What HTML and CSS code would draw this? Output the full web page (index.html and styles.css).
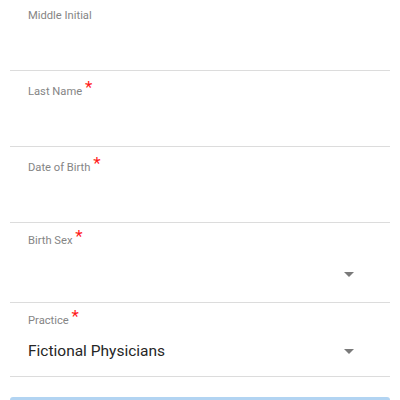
FILE: index.html
```html
<!DOCTYPE html>
<html>
<head>
<meta charset="utf-8">
<link rel="stylesheet" href="styles.css">
</head>
<body>
<div class="form">
  <div class="field field-first">
    <div class="label">Middle Initial</div>
  </div>
  <div class="field field-text">
    <div class="label">Last Name <span class="req">*</span></div>
  </div>
  <div class="field field-text">
    <div class="label">Date of Birth <span class="req">*</span></div>
  </div>
  <div class="field field-select field-tall">
    <div class="label">Birth Sex <span class="req">*</span></div>
    <div class="select">
      <span class="value"></span>
      <span class="arrow"></span>
    </div>
  </div>
  <div class="field field-select">
    <div class="label">Practice <span class="req">*</span></div>
    <div class="select">
      <span class="value">Fictional Physicians</span>
      <span class="arrow"></span>
    </div>
  </div>
  <div class="button-bar"></div>
</div>
</body>
</html>
```
FILE: styles.css
```css
html, body {
  margin: 0;
  padding: 0;
  background: #fff;
  font-family: Roboto, "Liberation Sans", sans-serif;
}
.form {
  padding: 0 10px;
  display: flex;
  flex-direction: column;
}
.field {
  box-sizing: border-box;
  border-bottom: 1px solid #dcdcdc;
  padding: 13px 36px 0 18px;
  display: flex;
  flex-direction: column;
}
.field-first {
  height: 71px;
  padding-top: 9px;
}
.field-text {
  height: 76px;
}
.field-select {
  height: 74px;
  padding-top: 10px;
}
.field-tall.field-select {
  height: 80px;
}
.label {
  font-size: 11.2px;
  line-height: 14px;
  color: #858585;
  height: 14px;
}
.req {
  color: #ff1a1a;
  font-size: 17px;
  line-height: 10px;
  position: relative;
  top: -2px;
}
.select {
  display: flex;
  align-items: center;
  justify-content: space-between;
  height: 30px;
  margin-top: 9px;
}
.field-tall .select {
  margin-top: 12px;
}
.value {
  font-size: 15.5px;
  color: #262626;
}
.arrow {
  width: 0;
  height: 0;
  border-left: 5px solid transparent;
  border-right: 5px solid transparent;
  border-top: 5px solid #7a7a7a;
}
.button-bar {
  margin-top: 20px;
  height: 20px;
  background: #b2d4f2;
  border-radius: 3px;
}
```
